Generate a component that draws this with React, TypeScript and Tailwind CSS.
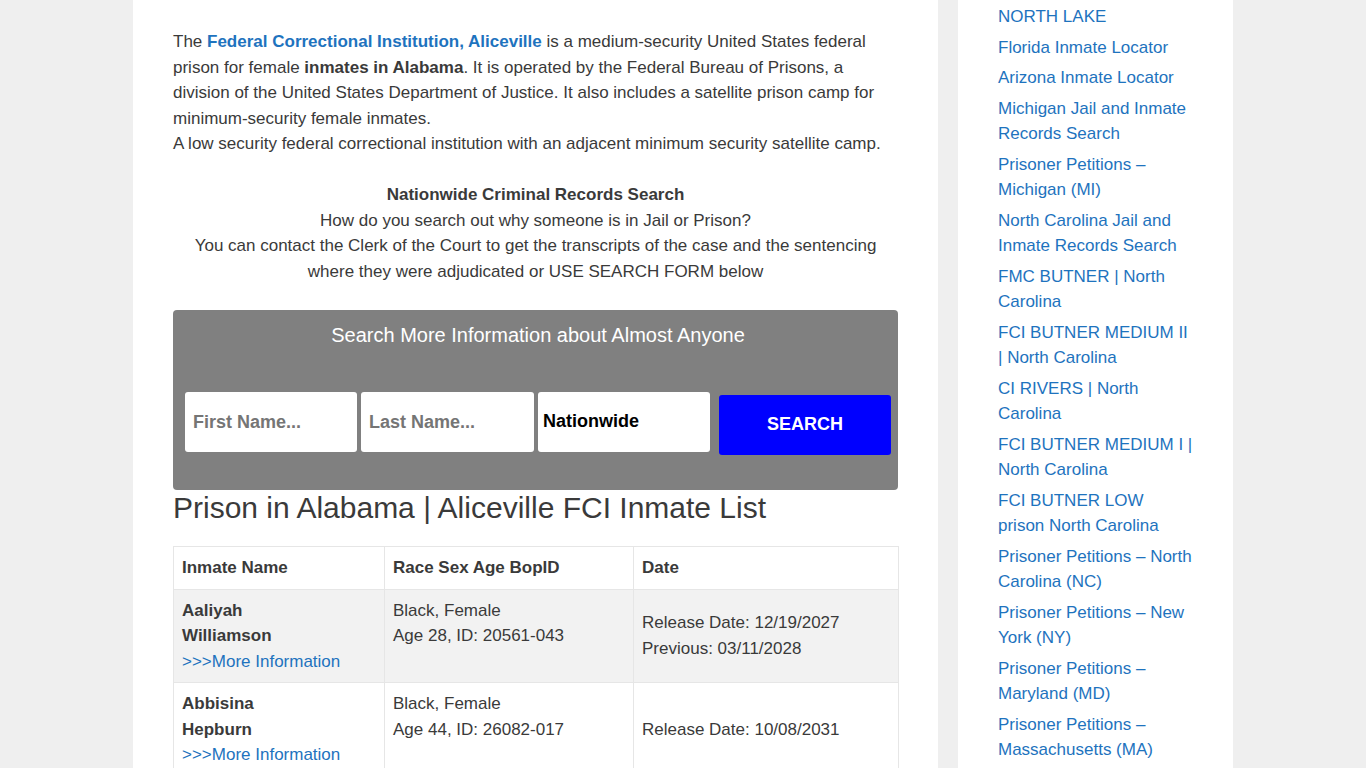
import React from 'react';

const sidebarLinks = [
  'NORTH LAKE',
  'Florida Inmate Locator',
  'Arizona Inmate Locator',
  'Michigan Jail and Inmate Records Search',
  'Prisoner Petitions – Michigan (MI)',
  'North Carolina Jail and Inmate Records Search',
  'FMC BUTNER | North Carolina',
  'FCI BUTNER MEDIUM II | North Carolina',
  'CI RIVERS | North Carolina',
  'FCI BUTNER MEDIUM I | North Carolina',
  'FCI BUTNER LOW prison North Carolina',
  'Prisoner Petitions – North Carolina (NC)',
  'Prisoner Petitions – New York (NY)',
  'Prisoner Petitions – Maryland (MD)',
  'Prisoner Petitions – Massachusetts (MA)',
  'Prisoner Petitions – Louisiana (LA)',
];

const inmates = [
  {
    first: 'Aaliyah',
    last: 'Williamson',
    race: 'Black, Female',
    info: 'Age 28, ID: 20561-043',
    dates: ['Release Date: 12/19/2027', 'Previous: 03/11/2028'],
  },
  {
    first: 'Abbisina',
    last: 'Hepburn',
    race: 'Black, Female',
    info: 'Age 44, ID: 26082-017',
    dates: ['Release Date: 10/08/2031'],
  },
  {
    first: 'Abby',
    last: 'Robinson',
    race: 'White, Female',
    info: 'Age 39, ID: 18342-002',
    dates: ['Release Date: 04/22/2026'],
  },
];

function SearchForm() {
  return (
    <div className="bg-[#808080] rounded-[4px] pt-[13px] pb-[35px] pl-[12px] pr-[7px]">
      <h3 className="text-center text-white text-[20px] leading-[24px] mb-[45px]">
        Search More Information about Almost Anyone
      </h3>
      <div className="flex items-start">
        <input
          type="text"
          placeholder="First Name..."
          className="w-[172px] h-[60px] bg-white rounded-[3px] pl-[8px] text-[18px] font-bold text-black placeholder:text-[#757575] outline-none"
        />
        <input
          type="text"
          placeholder="Last Name..."
          className="ml-[4px] w-[173px] h-[60px] bg-white rounded-[3px] pl-[8px] text-[18px] font-bold text-black placeholder:text-[#757575] outline-none"
        />
        <div className="ml-[4px] w-[172px] h-[60px] bg-white rounded-[3px] pl-[5px] flex items-center text-[18px] font-bold text-black">
          Nationwide
        </div>
        <button className="ml-[9px] mt-[3px] w-[172px] h-[60px] bg-[#0000ff] rounded-[3px] text-white text-[18px] font-bold">
          SEARCH
        </button>
      </div>
    </div>
  );
}

function InmateTable() {
  return (
    <table className="w-[725px] border-collapse table-fixed">
      <colgroup>
        <col className="w-[211px]" />
        <col className="w-[249px]" />
        <col className="w-[265px]" />
      </colgroup>
      <thead>
        <tr>
          <th className="border border-[#e6e6e6] p-[8px] text-left font-bold">Inmate Name</th>
          <th className="border border-[#e6e6e6] p-[8px] text-left font-bold">Race Sex Age BopID</th>
          <th className="border border-[#e6e6e6] p-[8px] text-left font-bold">Date</th>
        </tr>
      </thead>
      <tbody>
        {inmates.map((m, i) => (
          <tr key={m.last} className={i % 2 === 0 ? 'bg-[#f2f2f2]' : 'bg-white'}>
            <td className="border border-[#e6e6e6] p-[8px] align-top">
              <strong>{m.first}</strong>
              <br />
              <strong>{m.last}</strong>
              <br />
              <a href="#" className="text-[#1e73be]">
                &gt;&gt;&gt;More Information
              </a>
            </td>
            <td className="border border-[#e6e6e6] p-[8px] align-top">
              {m.race}
              <br />
              {m.info}
            </td>
            <td className="border border-[#e6e6e6] p-[8px] align-middle">
              {m.dates.map((d) => (
                <div key={d}>{d}</div>
              ))}
            </td>
          </tr>
        ))}
      </tbody>
    </table>
  );
}

export default function App() {
  return (
    <div className="h-screen overflow-hidden bg-[#efefef] font-['Liberation_Sans',Arial,sans-serif] text-[17px] leading-[25.5px] text-[#3a3a3a]">
      <div className="w-[1100px] mx-auto flex gap-[20px] items-start">
        {/* Article */}
        <main className="w-[805px] min-h-screen bg-white px-[40px] pt-[29px] pb-[40px]">
          <p className="mb-[25.5px]">
            The{' '}
            <a href="#" className="text-[#1e73be] font-bold">
              Federal Correctional Institution, Aliceville
            </a>{' '}
            is a medium-security United States federal prison for female <strong>inmates in Alabama</strong>. It
            is operated by the Federal Bureau of Prisons, a division of the United States Department of Justice. It
            also includes a satellite prison camp for minimum-security female inmates.
            <br />A low security federal correctional institution with an adjacent minimum security satellite camp.
          </p>

          <p className="text-center mb-[26px]">
            <strong>Nationwide Criminal Records Search</strong>
            <br />
            How do you search out why someone is in Jail or Prison?
            <br />
            You can contact the Clerk of the Court to get the transcripts of the case and the sentencing where they
            were adjudicated or USE SEARCH FORM below
          </p>

          <SearchForm />

          <h2 className="text-[30px] leading-[36px] text-[#3a3a3a] mb-[20px]">
            Prison in Alabama | Aliceville FCI Inmate List
          </h2>

          <InmateTable />
        </main>

        {/* Sidebar */}
        <aside className="w-[275px] min-h-screen bg-white px-[40px] pt-[4px]">
          <ul>
            {sidebarLinks.map((l) => (
              <li key={l} className="mb-[5px]">
                <a href="#" className="text-[#1e73be]">
                  {l}
                </a>
              </li>
            ))}
          </ul>
        </aside>
      </div>
    </div>
  );
}
